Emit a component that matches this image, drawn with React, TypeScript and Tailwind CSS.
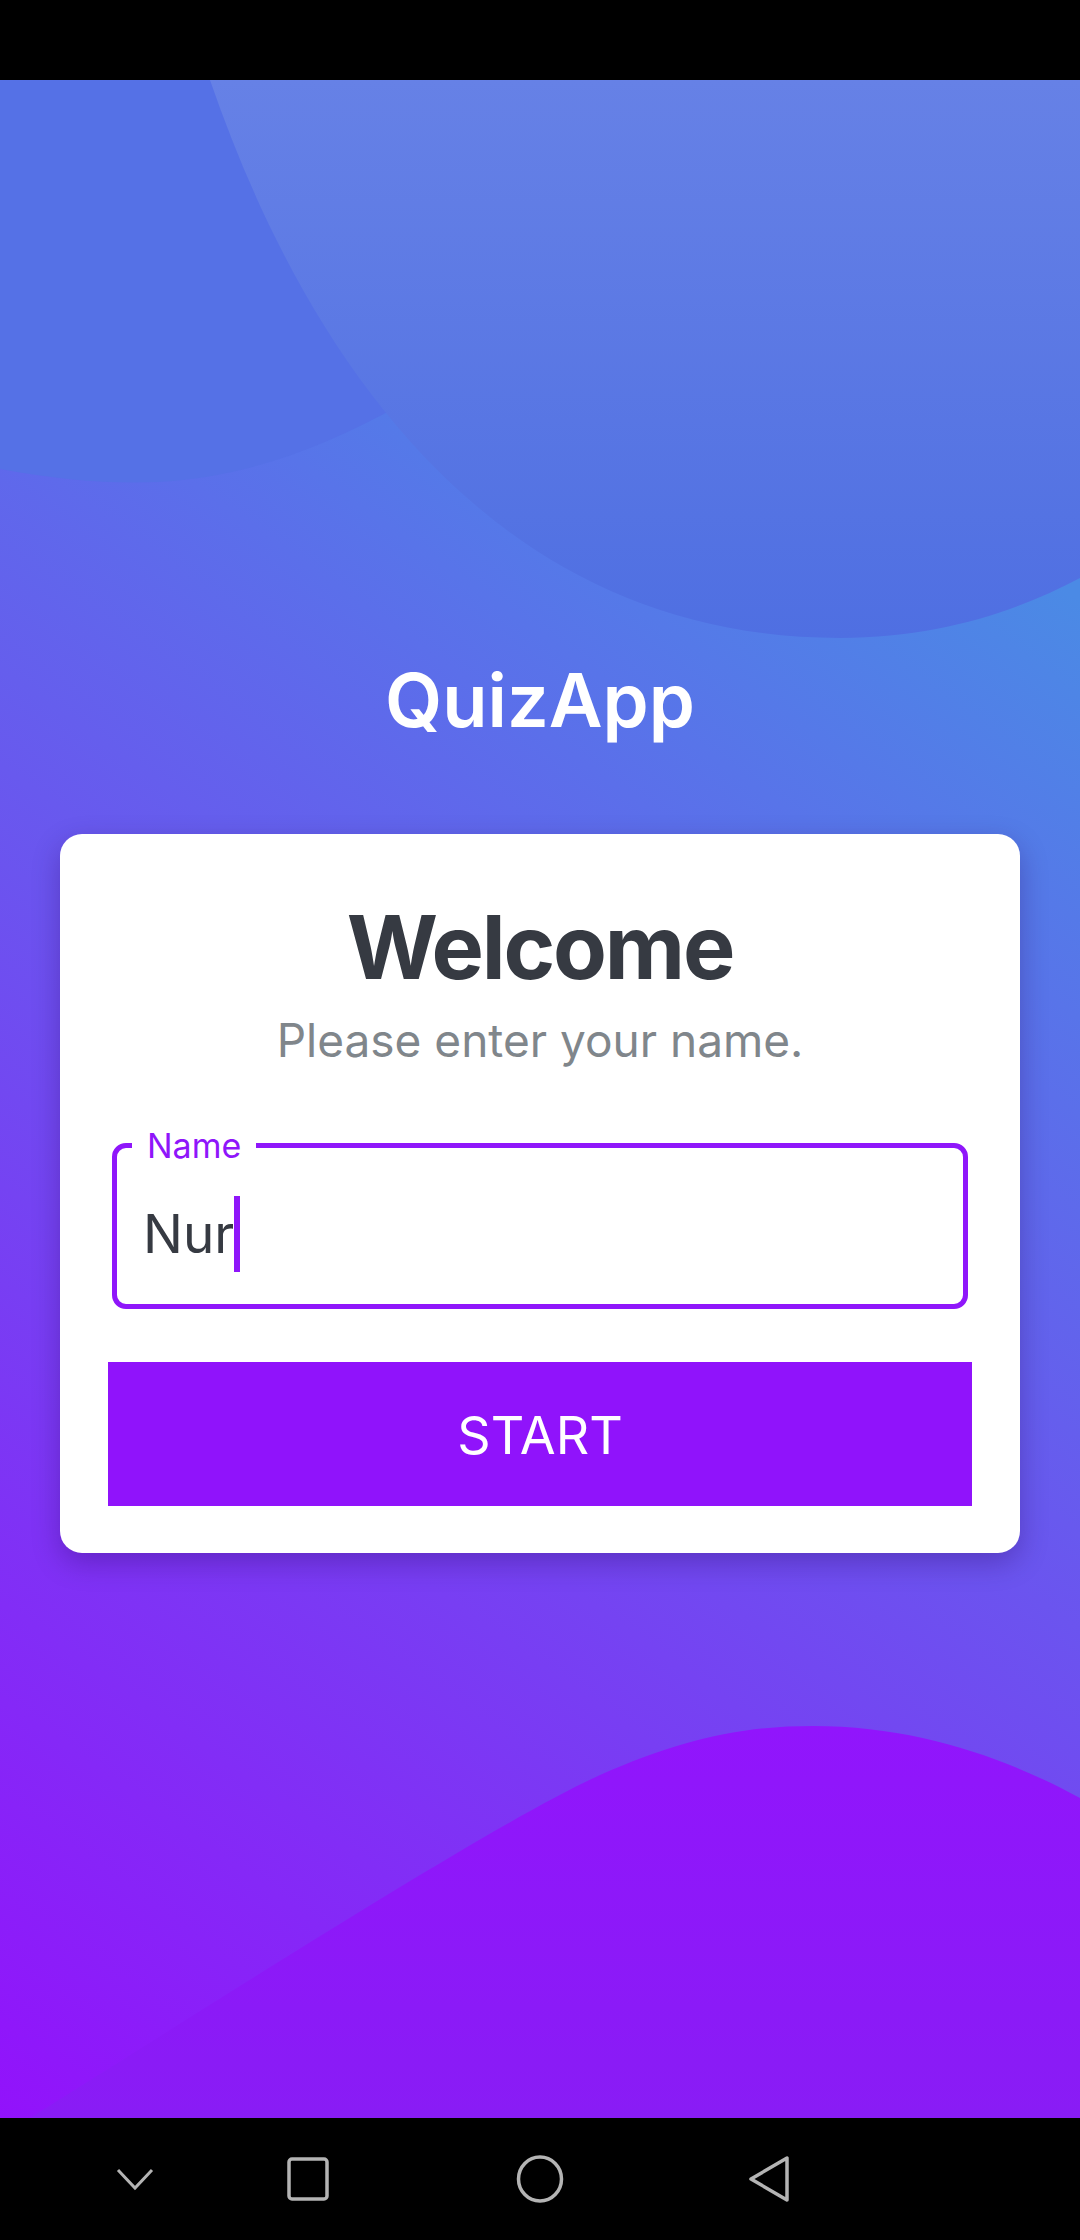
import React from "react";

function Backdrop() {
    return (
        <svg className="absolute inset-0 w-full h-full" viewBox="0 0 1080 2038" preserveAspectRatio="none">
            <defs>
                <linearGradient id="base" gradientUnits="userSpaceOnUse" x1="0" y1="2038" x2="1080" y2="520">
                    <stop offset="0" stopColor="#9212fb"/>
                    <stop offset="1" stopColor="#4b8ae5"/>
                </linearGradient>
                <linearGradient id="blob" gradientUnits="userSpaceOnUse" x1="0" y1="0" x2="0" y2="558">
                    <stop offset="0" stopColor="#6681e6"/>
                    <stop offset="1" stopColor="#4f6fe2"/>
                </linearGradient>
                <linearGradient id="wave" gradientUnits="userSpaceOnUse" x1="0" y1="1646" x2="0" y2="2038">
                    <stop offset="0" stopColor="#9115fc"/>
                    <stop offset="1" stopColor="#891cf5"/>
                </linearGradient>
            </defs>
            <rect x="0" y="0" width="1080" height="2038" fill="url(#base)"/>
            <path d="M0,0 L0,389 C60,400 110,404 158,402 C240,398 320,370 400,325 L400,0 Z" fill="#5571e6"/>
            <path d="M210,0 C310,290 500,558 840,558 C940,558 1020,530 1080,498 L1080,0 Z" fill="url(#blob)"/>
            <path d="M30,2038 C250,1900 500,1740 600,1695 C680,1660 740,1646 813,1646 C920,1646 1010,1680 1080,1718 L1080,2038 Z" fill="url(#wave)"/>
        </svg>
    );
}

function NavBar() {
    return (
        <div className="flex items-center h-[122px] bg-black">
            <svg className="ml-[115px]" width="40" height="24" viewBox="0 0 40 24">
                <path d="M3,3 L20,21 L37,3" fill="none" stroke="#b4b4b4" strokeWidth="3"/>
            </svg>
            <svg className="ml-[131px]" width="44" height="44" viewBox="0 0 44 44">
                <rect x="3" y="2" width="38" height="40" rx="3" fill="none" stroke="#b4b4b4" strokeWidth="3.5"/>
            </svg>
            <svg className="ml-[185px]" width="50" height="50" viewBox="0 0 50 50">
                <ellipse cx="25" cy="25" rx="21.5" ry="22" fill="none" stroke="#b4b4b4" strokeWidth="3.5"/>
            </svg>
            <svg className="ml-[182px]" width="44" height="48" viewBox="0 0 44 48">
                <path d="M40,3 L40,45 L4,24 Z" fill="none" stroke="#b4b4b4" strokeWidth="3.5" strokeLinejoin="round"/>
            </svg>
        </div>
    );
}

export default function App() {
    return (
        <div className="w-[1080px] h-[2240px] flex flex-col bg-black" style={{fontFamily: "Inter, 'Noto Sans', sans-serif"}}>
            <div className="h-[80px] bg-black"/>

            <main className="relative h-[2038px] overflow-hidden">
                <Backdrop/>
                <div className="relative flex flex-col items-center pt-[583px]">
                    <h1 className="text-white text-[74px] leading-none font-semibold">QuizApp</h1>

                    <div className="mt-[97px] w-[960px] bg-white rounded-[22px] shadow-[0_10px_28px_rgba(40,0,90,0.3)] px-[48px] pt-[69px] pb-[47px] flex flex-col">
                        <h2 className="text-center text-[#363a42] text-[88px] leading-none font-bold tracking-tight">Welcome</h2>
                        <p className="mt-[26px] text-center text-[#80868b] text-[46px] leading-none">Please enter your name.</p>

                        <div className="relative mt-[80px] mx-[4px] h-[166px] border-[5px] border-[#8f16fa] rounded-[14px] flex items-center pl-[26px] pt-[16px]">
                            <span className="absolute left-[15px] -top-[19px] px-[15px] bg-white text-[#8f16fa] text-[34px] leading-none">Name</span>
                            <span className="text-[#363a42] text-[53px] leading-none">Nur</span>
                            <span className="w-[6px] h-[76px] bg-[#8f16fa]"/>
                        </div>

                        <button className="mt-[53px] h-[144px] pt-[4px] bg-[#9013fb] text-white text-[52px] leading-none">START</button>
                    </div>
                </div>
            </main>

            <NavBar/>
        </div>
    );
}
